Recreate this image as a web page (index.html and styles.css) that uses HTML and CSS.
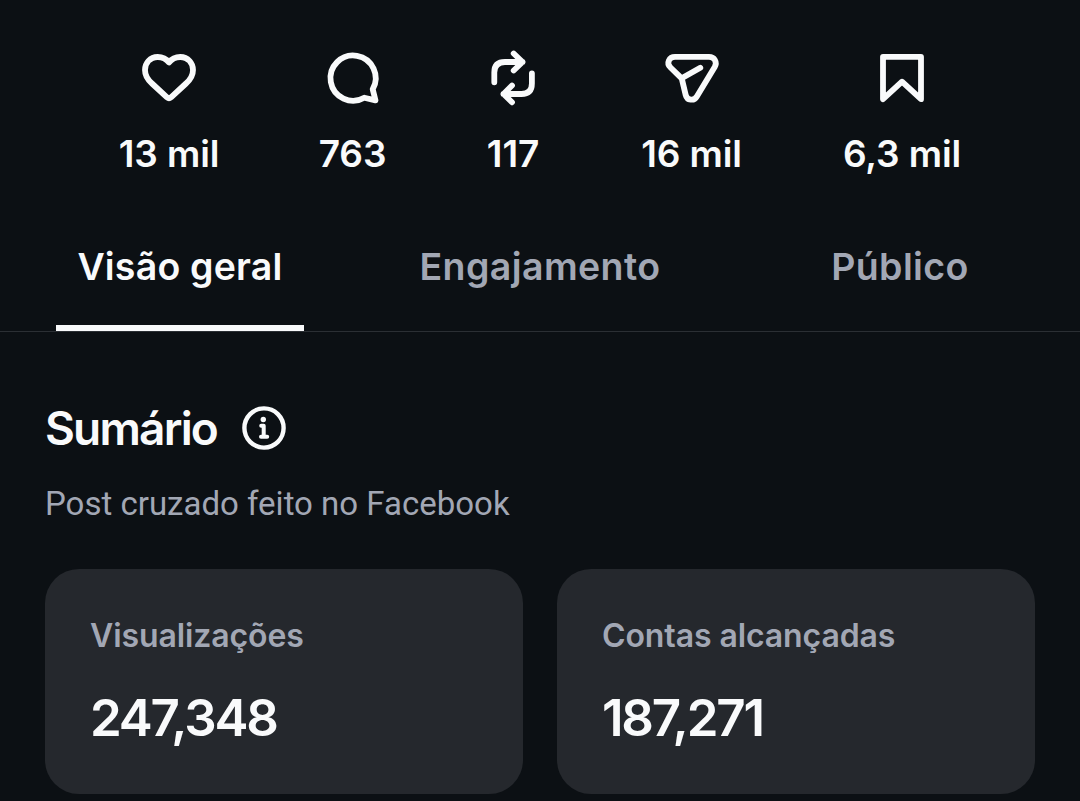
FILE: index.html
```html
<!DOCTYPE html>
<html lang="pt-BR">
<head>
    <meta charset="UTF-8">
    <meta name="viewport" content="width=device-width, initial-scale=1.0">
    <title>Insights</title>
    <link rel="stylesheet" href="styles.css">
</head>
<body>

<ul class="stats">
    <li class="stat">
        <svg class="icon" viewBox="0 0 60 60"><path d="M30 14.500C27 10.500 23 9 18.700 9C11 9 6 15 6 22C6 28 9 32 13 35.500L28 49.300Q30 51 32 49.300L47 35.500C51 32 54 28 54 22C54 15 49 9 41.300 9C37 9 33 10.500 30 14.500Z"/></svg>
        <span class="count">13 mil</span>
    </li>
    <li class="stat">
        <svg class="icon" viewBox="0 0 60 60"><path d="M49.700 41.300A22.600 22.600 0 1 0 41.300 49.700L52.500 52.400Z"/></svg>
        <span class="count">763</span>
    </li>
    <li class="stat">
        <svg class="icon" viewBox="0 0 60 60"><path d="M11.300 34.300V24.500Q11.300 14 22 14H39.500M30.700 5.500L39.500 14L30.700 22.500M48.900 25.300V35.500Q48.900 46 38.500 46H20.500M29 37.500L20.500 46L29 54.300"/></svg>
        <span class="count">117</span>
    </li>
    <li class="stat">
        <svg class="icon" viewBox="0 0 60 60"><path d="M13 8.900H47C52.500 8.900 55.500 14 52.700 19L35 48.200C32 53.500 25 52.500 23.700 47L19.700 30.300L8.500 19.500C4 15.200 7 8.900 13 8.900ZM19.700 30.300L38.300 19.700"/></svg>
        <span class="count">16 mil</span>
    </li>
    <li class="stat">
        <svg class="icon" viewBox="0 0 60 60"><path d="M11 8.800H49V51.200L30 33.700L11 51.200Z"/></svg>
        <span class="count">6,3 mil</span>
    </li>
</ul>

<nav class="tabs">
    <a href="#" class="tab active">Visão geral</a>
    <a href="#" class="tab">Engajamento</a>
    <a href="#" class="tab">Público</a>
</nav>

<main class="summary">
    <div class="heading">
        <h1>Sumário</h1>
        <svg class="info" viewBox="0 0 46 46">
            <circle class="ring" cx="23" cy="23" r="19.600"/>
            <circle class="dot" cx="22.300" cy="14.500" r="2.700"/>
            <path class="stem" d="M20.200 20.800H22.700V31.500M20 31.800H26.200"/>
        </svg>
    </div>
    <p class="note">Post cruzado feito no Facebook</p>

    <div class="cards">
        <div class="card">
            <h2>Visualizações</h2>
            <p class="value">247,348</p>
        </div>
        <div class="card">
            <h2>Contas alcançadas</h2>
            <p class="value">187,271</p>
        </div>
    </div>
</main>

</body>
</html>
```

FILE: styles.css
```css
* {
    box-sizing: border-box;
}
body {
    margin: 0;
    font-family: Inter, "Liberation Sans", sans-serif;
    background-color: #0c1014;
    color: #f9fafb;
}
h1, h2, p, ul {
    margin: 0;
    padding: 0;
}

/* Post counters */
.stats {
    display: grid;
    grid-template-columns: 102px 66px 56px 102px 120px;
    column-gap: 99.5px;
    justify-content: center;
    padding-top: 48px;
    height: 200px;
    list-style: none;
}
.stat {
    display: flex;
    flex-direction: column;
    align-items: center;
}
.icon {
    width: 60px;
    height: 60px;
    fill: none;
    stroke: #f9fafb;
    stroke-width: 5.8;
    stroke-linecap: round;
    stroke-linejoin: round;
}
.count {
    margin-top: 22px;
    font-size: 37px;
    font-weight: 600;
    line-height: 48px;
    letter-spacing: -0.1px;
    white-space: nowrap;
}

/* Tabs */
.tabs {
    display: grid;
    grid-template-columns: repeat(3, 248px);
    justify-content: space-between;
    padding: 0 56px;
    height: 132px;
    border-bottom: 1px solid #2b2f34;
}
.tab {
    padding-top: 43px;
    font-size: 37.5px;
    font-weight: 600;
    line-height: 48px;
    letter-spacing: 0.4px;
    text-align: center;
    text-decoration: none;
    color: #a2a7b4;
}
.tab.active {
    color: #f9fafb;
    border-bottom: 6px solid #f9fafb;
    letter-spacing: 0.2px;
}

/* Summary */
.summary {
    padding: 68px 45px 0;
}
.heading {
    display: flex;
    align-items: center;
    gap: 24px;
    height: 56px;
}
h1 {
    font-size: 46px;
    font-weight: 600;
    letter-spacing: -1.8px;
}
.info {
    width: 46px;
    height: 46px;
    fill: none;
    stroke: #f9fafb;
    stroke-linecap: round;
    stroke-linejoin: round;
}
.ring {
    stroke-width: 4.4;
}
.dot {
    fill: #f9fafb;
    stroke: none;
}
.stem {
    stroke-width: 4;
}
.note {
    margin-top: 28px;
    font-family: Roboto, "Liberation Sans", sans-serif;
    font-size: 33px;
    line-height: 40px;
    color: #a2a7b4;
}
.cards {
    display: grid;
    grid-template-columns: 1fr 1fr;
    gap: 34px;
    margin-top: 45px;
}
.card {
    height: 225px;
    padding: 46px 45px;
    border-radius: 34px;
    background-color: #25282d;
}
h2 {
    font-size: 32px;
    font-weight: 600;
    line-height: 42px;
    letter-spacing: -0.1px;
    color: #a2a7b4;
}
.value {
    margin-top: 30px;
    font-size: 51px;
    font-weight: 600;
    line-height: 62px;
    letter-spacing: -2.2px;
}
```
